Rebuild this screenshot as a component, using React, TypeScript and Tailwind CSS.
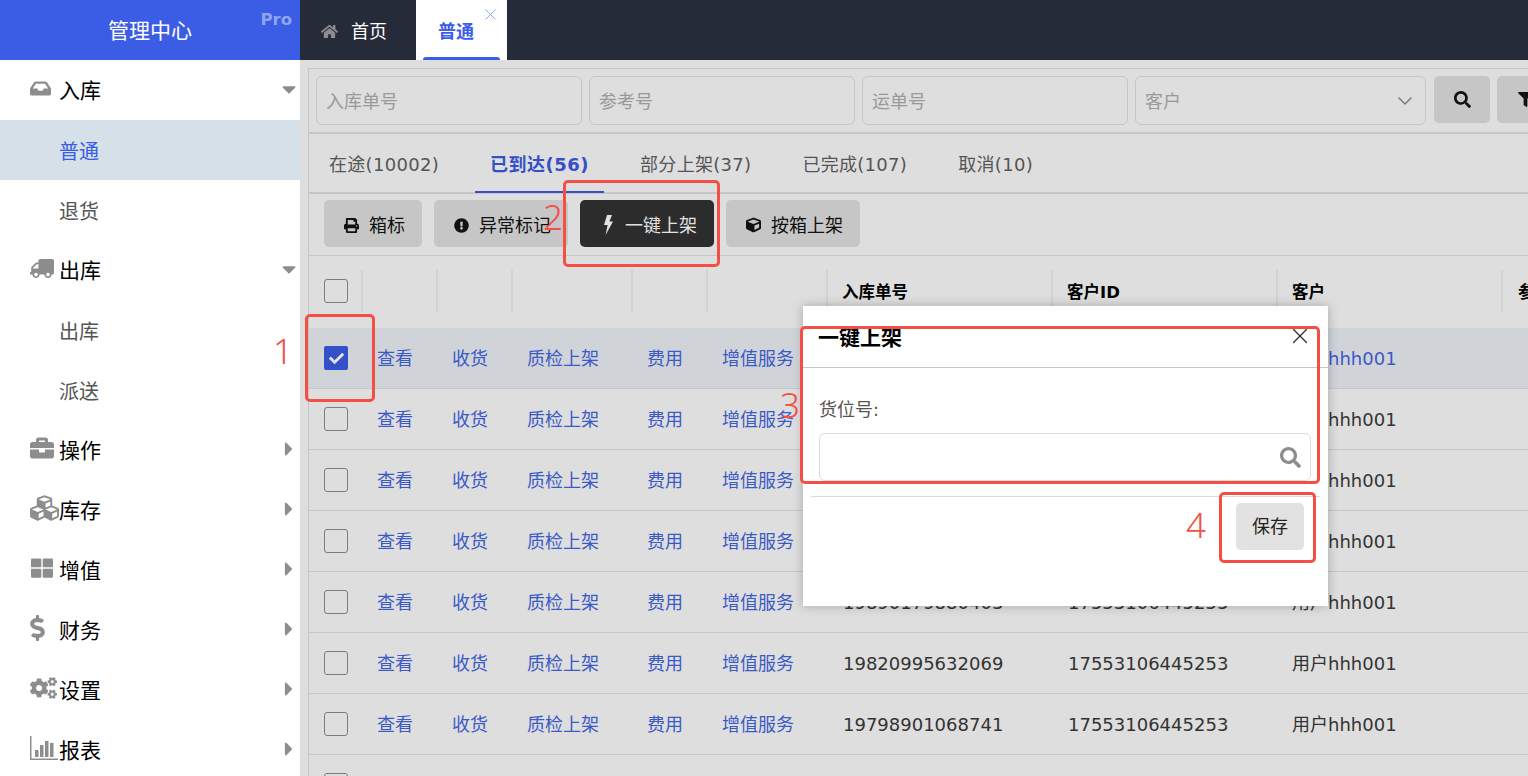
import type { ReactNode } from "react";
import {
  FaBriefcase,
  FaCaretDown,
  FaCaretRight,
  FaCheck,
  FaCogs,
  FaCube,
  FaCubes,
  FaDollarSign,
  FaExclamationCircle,
  FaFilter,
  FaHome,
  FaInbox,
  FaPrint,
  FaSearch,
  FaThLarge,
  FaTruck,
} from "react-icons/fa";
import { ChevronDown, X } from "lucide-react";

const FONT = "font-['DejaVu_Sans','Noto_Sans_CJK_SC',sans-serif]";

function BarsIcon() {
  return (
    <svg viewBox="0 0 28 24" className="h-[24px] w-[28px]" fill="currentColor">
      <rect x="0" y="0" width="1.5" height="24" />
      <rect x="0" y="22.5" width="28" height="1.5" />
      <rect x="5" y="14" width="3.5" height="7" />
      <rect x="10" y="9" width="3.5" height="12" />
      <rect x="15" y="5" width="3.5" height="16" />
      <rect x="20" y="7" width="3.5" height="14" />
    </svg>
  );
}

function BoltIcon() {
  return (
    <svg viewBox="0 0 10 20" className="h-[20px] w-[10px]" fill="currentColor">
      <path d="M4 0h5L6.4 6.5H10L2.6 20l2-10H1z" />
    </svg>
  );
}

const menu: {
  label: string;
  icon: ReactNode;
  open?: boolean;
  children?: { label: string; active?: boolean }[];
}[] = [
  {
    label: "入库",
    icon: <FaInbox className="h-[21px] w-[21px]" />,
    open: true,
    children: [{ label: "普通", active: true }, { label: "退货" }],
  },
  {
    label: "出库",
    icon: <FaTruck className="h-[21px] w-[24px] -scale-x-100" />,
    open: true,
    children: [{ label: "出库" }, { label: "派送" }],
  },
  { label: "操作", icon: <FaBriefcase className="h-[24px] w-[24px]" /> },
  { label: "库存", icon: <FaCubes className="h-[30px] w-[30px]" /> },
  { label: "增值", icon: <FaThLarge className="h-[22px] w-[24px]" /> },
  { label: "财务", icon: <FaDollarSign className="h-[26px] w-[15px]" /> },
  { label: "设置", icon: <FaCogs className="h-[24px] w-[27px]" /> },
  { label: "报表", icon: <BarsIcon /> },
];

const tabs = [
  { label: "在途(10002)" },
  { label: "已到达(56)", active: true },
  { label: "部分上架(37)" },
  { label: "已完成(107)" },
  { label: "取消(10)" },
];

const actions = ["查看", "收货", "质检上架", "费用", "增值服务"];
const actionWidths = ["w-[75px]", "w-[75px]", "w-[120px]", "w-[75px]", "w-[120px]"];

const rows = [
  "19911203385021",
  "19905317720846",
  "19901642087315",
  "19900178352094",
  "19890179880403",
  "19820995632069",
  "19798901068741",
  "19798901068702",
];

function Sidebar() {
  return (
    <aside className="flex w-[300px] shrink-0 flex-col bg-white">
      <div className="relative flex h-[60px] shrink-0 items-center justify-center bg-[#3b5ce4] pt-[4px] text-[21px] text-white">
        管理中心
        <span className="absolute right-[8px] top-[9px] text-[16.5px] font-bold leading-[22px] text-[#8fa5f1]">Pro</span>
      </div>
      {menu.map((item) => (
        <div key={item.label}>
          <div className="flex h-[60px] items-center pl-[30px] pr-0 pt-[4px] text-[21px] text-black">
            <span className="mb-[8px] flex h-[30px] w-[29px] shrink-0 items-center justify-start text-[#8d8d8d]">{item.icon}</span>
            <span className="flex-1">{item.label}</span>
            {item.open ? (
              <FaCaretDown className="mb-[6px] h-[22px] w-[22px] text-[#8d8d8d]" />
            ) : (
              <FaCaretRight className="mb-[6px] mr-[3px] h-[22px] w-[16px] text-[#8d8d8d]" />
            )}
          </div>
          {item.children?.map((child) => (
            <div
              key={child.label}
              className={`flex h-[60px] items-center pl-[59px] pt-[4px] text-[20px] ${
                child.active ? "bg-[#d5e0e9] text-[#3b5ce4]" : "text-[#555]"
              }`}
            >
              {child.label}
            </div>
          ))}
        </div>
      ))}
    </aside>
  );
}

function TopBar() {
  return (
    <header className="flex h-[60px] shrink-0 items-stretch bg-[#252b38]">
      <div className="flex w-[116px] items-center pl-[21px] pt-[2px] text-[18px] text-white">
        <FaHome className="mr-[13px] h-[17px] w-[17px] text-[#8d8d8d]" />
        首页
      </div>
      <div className="relative flex w-[91px] justify-center bg-white pt-[20px] text-[18px] font-bold text-[#3b5ce4]">
        <span className="mr-[11px] leading-[24px]">普通</span>
        <X className="absolute right-[7px] top-[5px] h-[19px] w-[19px] text-[#8fa5f1]" strokeWidth={1.25} />
        <span className="absolute bottom-0 left-[7px] h-[3px] w-[77px] rounded-t-sm bg-[#3b5ce4]" />
      </div>
    </header>
  );
}

function FilterInput({ label, width }: { label: string; width: string }) {
  return (
    <div className={`flex h-[49px] items-center rounded-[6px] border border-[#c6c6c6] pl-[9px] pt-[2px] text-[18px] text-[#999] ${width}`}>
      {label}
    </div>
  );
}

function ToolButton({ icon, label, width, dark }: { icon: ReactNode; label: string; width: string; dark?: boolean }) {
  return (
    <button
      className={`flex h-[47px] items-center rounded-[5px] pl-[20px] pt-[3px] text-[18px] ${width} ${
        dark ? "bg-[#2c2c2c] text-[#e2e2e2]" : "bg-[#c6c6c6] text-[#111]"
      }`}
    >
      <span className="mr-[10px] flex w-[15px] justify-center">{icon}</span>
      {label}
    </button>
  );
}

function Checkbox({ checked }: { checked?: boolean }) {
  return checked ? (
    <span className="flex h-[24px] w-[24px] items-center justify-center rounded-[2px] bg-[#3450c8]">
      <FaCheck className="h-[15px] w-[15px] text-[#e2e2e2]" />
    </span>
  ) : (
    <span className="block h-[24px] w-[24px] rounded-[3px] border border-[#7c7c7c]" />
  );
}

function HeaderCell({ width, label }: { width: string; label?: string }) {
  return (
    <div className={`flex h-[42px] shrink-0 items-center border-r-2 border-[#d2d2d2] pl-[14px] pt-[4px] text-[16.5px] font-bold text-black ${width}`}>
      {label}
    </div>
  );
}

function Table() {
  return (
    <div className="text-[18px]">
      <div className="flex h-[72px] items-center pb-[2px]">
        <div className="flex h-[42px] w-[54px] shrink-0 items-center border-r-2 border-[#d2d2d2] pl-[15px]">
          <Checkbox />
        </div>
        <HeaderCell width="w-[75px]" />
        <HeaderCell width="w-[75px]" />
        <HeaderCell width="w-[120px]" />
        <HeaderCell width="w-[75px]" />
        <HeaderCell width="w-[120px]" />
        <HeaderCell width="w-[225px]" label="入库单号" />
        <HeaderCell width="w-[225px]" label="客户ID" />
        <HeaderCell width="w-[225px]" label="客户" />
        <div className="flex h-[42px] shrink-0 items-center pl-[15px] pt-[4px] text-[16.5px] font-bold text-black">参考号</div>
      </div>
      {rows.map((no, i) => (
        <div
          key={no}
          className={`flex h-[61px] items-center border-b border-[#c6c6c6] text-[#333] ${i === 0 ? "bg-[#d0d4d9]" : ""}`}
        >
          <div className="flex w-[54px] shrink-0 pl-[15px]">
            <Checkbox checked={i === 0} />
          </div>
          {actions.map((a, j) => (
            <div key={a} className={`shrink-0 pl-[14px] text-[#3b5ac6] ${actionWidths[j]}`}>
              {a}
            </div>
          ))}
          <div className="w-[225px] shrink-0 pl-[15px]">{no}</div>
          <div className="w-[225px] shrink-0 pl-[15px]">17553106445253</div>
          <div className={`w-[225px] shrink-0 pl-[14px] ${i === 0 ? "text-[#3b5ac6]" : ""}`}>用户hhh001</div>
        </div>
      ))}
    </div>
  );
}

function Modal() {
  return (
    <div className="absolute left-[803px] top-[306px] flex h-[300px] w-[525px] flex-col bg-white shadow-[0_0_10px_rgba(0,0,0,0.25)]">
      <div className="relative flex h-[62px] shrink-0 items-end border-b border-[#c6c6c6] pb-[15px] pl-[15px] text-[21px] font-bold leading-[28px] text-black">
        一键上架
        <X className="absolute right-[15px] top-[17px] h-[26px] w-[26px] text-[#333]" strokeWidth={1.25} />
      </div>
      <div className="pl-[16px] pr-[17px] pt-[30px] text-[#555]">
        <div className="text-[18px] leading-[24px]">货位号:</div>
        <div className="mt-[11px] flex h-[48px] items-center justify-end rounded-[6px] border border-[#dcdcdc] pr-[9px]">
          <FaSearch className="h-[21px] w-[21px] text-[#8d8d8d]" />
        </div>
      </div>
      <div className="mx-[8px] mt-[15px] flex justify-end border-t border-[#dcdcdc] pr-[16px] pt-[6px]">
        <button className="flex h-[47px] w-[68px] items-center justify-center rounded-[5px] bg-[#e2e2e2] text-[18px] text-[#222]">
          保存
        </button>
      </div>
    </div>
  );
}

function Callouts() {
  const box = "pointer-events-none absolute rounded-[5px] border-[3.5px] border-[#f44f45]";
  const num = "pointer-events-none absolute font-['Noto_Sans',sans-serif] font-light text-[35px] leading-[40px] text-[#f44f45]";
  return (
    <>
      <div className={`${box} left-[305px] top-[314px] h-[88px] w-[70px]`} />
      <div className={`${box} left-[563px] top-[180px] h-[87px] w-[157px]`} />
      <div className={`${box} left-[800px] top-[326px] h-[158px] w-[520px]`} />
      <div className={`${box} left-[1219px] top-[492px] h-[71px] w-[97px]`} />
      <span className={`${num} left-[273px] top-[331px]`}>1</span>
      <span className={`${num} left-[543px] top-[197px]`}>2</span>
      <span className={`${num} left-[780px] top-[385px]`}>3</span>
      <span className={`${num} left-[1186px] top-[505px]`}>4</span>
    </>
  );
}

export default function App() {
  return (
    <div className={`relative flex h-[776px] w-[1528px] overflow-hidden ${FONT}`}>
      <Sidebar />
      <div className="flex min-w-0 flex-1 flex-col bg-[#dedede]">
        <TopBar />
        <main className="ml-[8px] mt-[8px] flex-1 border-l border-t border-[#c6c6c6]">
          {/* Filters */}
          <div className="flex h-[65px] w-[1300px] gap-[7px] pl-[7px] pt-[7px]">
            <FilterInput label="入库单号" width="w-[266px]" />
            <FilterInput label="参考号" width="w-[266px]" />
            <FilterInput label="运单号" width="w-[266px]" />
            <div className="flex h-[49px] w-[291px] items-center justify-between rounded-[6px] border border-[#c6c6c6] pl-[9px] pr-[8px] pt-[2px] text-[18px] text-[#999]">
              客户
              <ChevronDown className="mb-[2px] h-[24px] w-[24px] text-[#7c7c7c]" strokeWidth={1.5} />
            </div>
            <button className="ml-[1px] flex h-[47px] w-[56px] shrink-0 items-center justify-center rounded-[5px] bg-[#c6c6c6]">
              <FaSearch className="h-[17px] w-[17px] text-[#111]" />
            </button>
            <button className="flex h-[47px] w-[56px] shrink-0 items-center justify-center rounded-[5px] bg-[#c6c6c6]">
              <FaFilter className="h-[15px] w-[15px] text-[#111]" />
            </button>
          </div>
          <div className="-mt-[2px] h-[2px] w-full bg-[#c6c6c6]" />

          {/* Status tabs */}
          <div className="flex h-[60px] border-b-2 border-[#c6c6c6] pl-[20px] text-[18px] tracking-[0.3px]">
            {tabs.map((tab) => (
              <div
                key={tab.label}
                className={`relative mr-[51px] flex items-center pt-[2px] ${tab.active ? "font-bold tracking-[0.5px] text-[#3450c8]" : "text-[#555]"}`}
              >
                {tab.label}
                {tab.active && <span className="absolute -bottom-[1px] -left-[15px] -right-[15px] h-[2px] bg-[#3450c8]" />}
              </div>
            ))}
          </div>

          {/* Toolbar */}
          <div className="flex h-[62px] border-b border-[#c6c6c6] pl-[15px] pt-[6px]">
            <ToolButton icon={<FaPrint className="h-[15px] w-[15px]" />} label="箱标" width="w-[98px]" />
            <ToolButton icon={<FaExclamationCircle className="h-[17px] w-[17px]" />} label="异常标记" width="ml-[12px] w-[134px]" />
            <ToolButton icon={<BoltIcon />} label="一键上架" width="ml-[12px] w-[134px]" dark />
            <ToolButton icon={<FaCube className="h-[18px] w-[18px]" />} label="按箱上架" width="ml-[12px] w-[134px]" />
          </div>

          <Table />
        </main>
      </div>
      <Modal />
      <Callouts />
    </div>
  );
}
